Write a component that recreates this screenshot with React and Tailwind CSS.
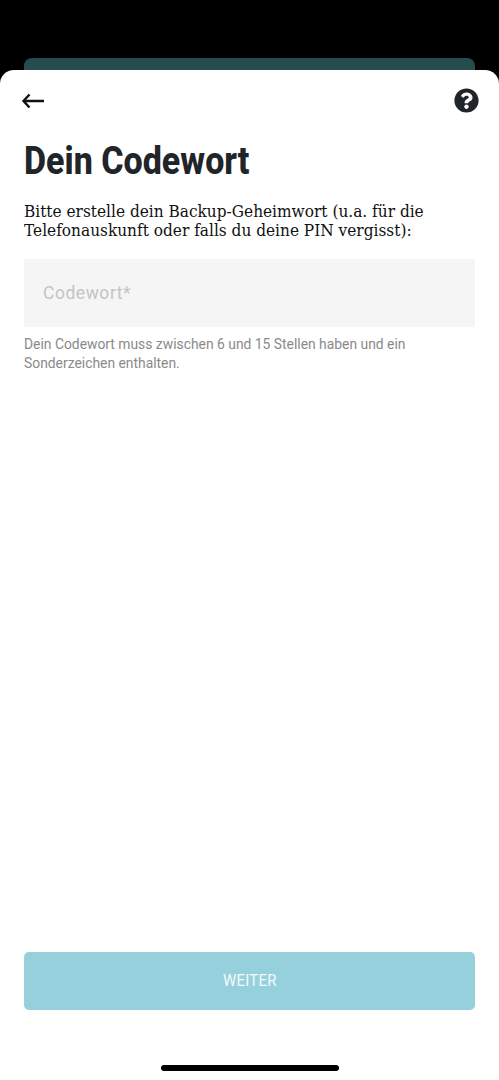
import { FaQuestionCircle } from 'react-icons/fa';

export default function App() {
  return (
    <div className="w-[499px] h-[1080px] bg-black flex flex-col overflow-hidden">
      <div className="h-[12px] mt-[58px] mx-6 rounded-t-[8px] bg-[#264c4c]" />

      <div className="flex-1 bg-white rounded-t-[14px] flex flex-col px-6">
        <div className="flex items-center justify-between h-[60px]">
          <svg width="24" height="16" viewBox="0 0 24 16" fill="none" stroke="#111" strokeWidth="2.4" className="-ml-[3px] mt-[1px]">
            <path d="M23 8H2.5M8.5 1.5 2.5 8l6 6.5" />
          </svg>
          <FaQuestionCircle className="text-[#212529] text-[25px] -mr-[4px]" />
        </div>

        <h1 className="font-['Roboto',sans-serif] font-extrabold text-[38px] leading-[44px] mt-[9px] text-[#212529] origin-left scale-x-[0.895] whitespace-nowrap">
          Dein Codewort
        </h1>

        <p className="font-['DejaVu_Serif',serif] text-[16px] leading-[19px] mt-[19px] text-[#111] origin-left scale-x-[0.96] whitespace-nowrap">
          Bitte erstelle dein Backup-Geheimwort (u.a. für die
          <br />
          Telefonauskunft oder falls du deine PIN vergisst):
        </p>

        <div className="h-[68px] mt-[19px] bg-[#f5f5f5] flex items-center px-5">
          <span className="font-['Roboto',sans-serif] text-[19px] text-[#c4c4c4] tracking-[0.6px] origin-left scale-x-[0.92] -ml-[1px]">Codewort*</span>
        </div>

        <p className="font-['Roboto',sans-serif] text-[14px] leading-[19px] mt-[8px] text-[#8a8a8a] origin-left scale-x-[0.99] whitespace-nowrap">
          Dein Codewort muss zwischen 6 und 15 Stellen haben und ein
          <br />
          Sonderzeichen enthalten.
        </p>

        <button className="mt-auto h-[58px] rounded-[5px] bg-[#96d0dc] text-white/90 text-[16px] font-['Roboto',sans-serif] tracking-[0.3px]">
          <span className="inline-block scale-x-[0.93]">WEITER</span>
        </button>

        <div className="h-[70px] flex items-end justify-center pb-[9px]">
          <div className="w-[178px] h-[6px] rounded-full bg-black" />
        </div>
      </div>
    </div>
  );
}
